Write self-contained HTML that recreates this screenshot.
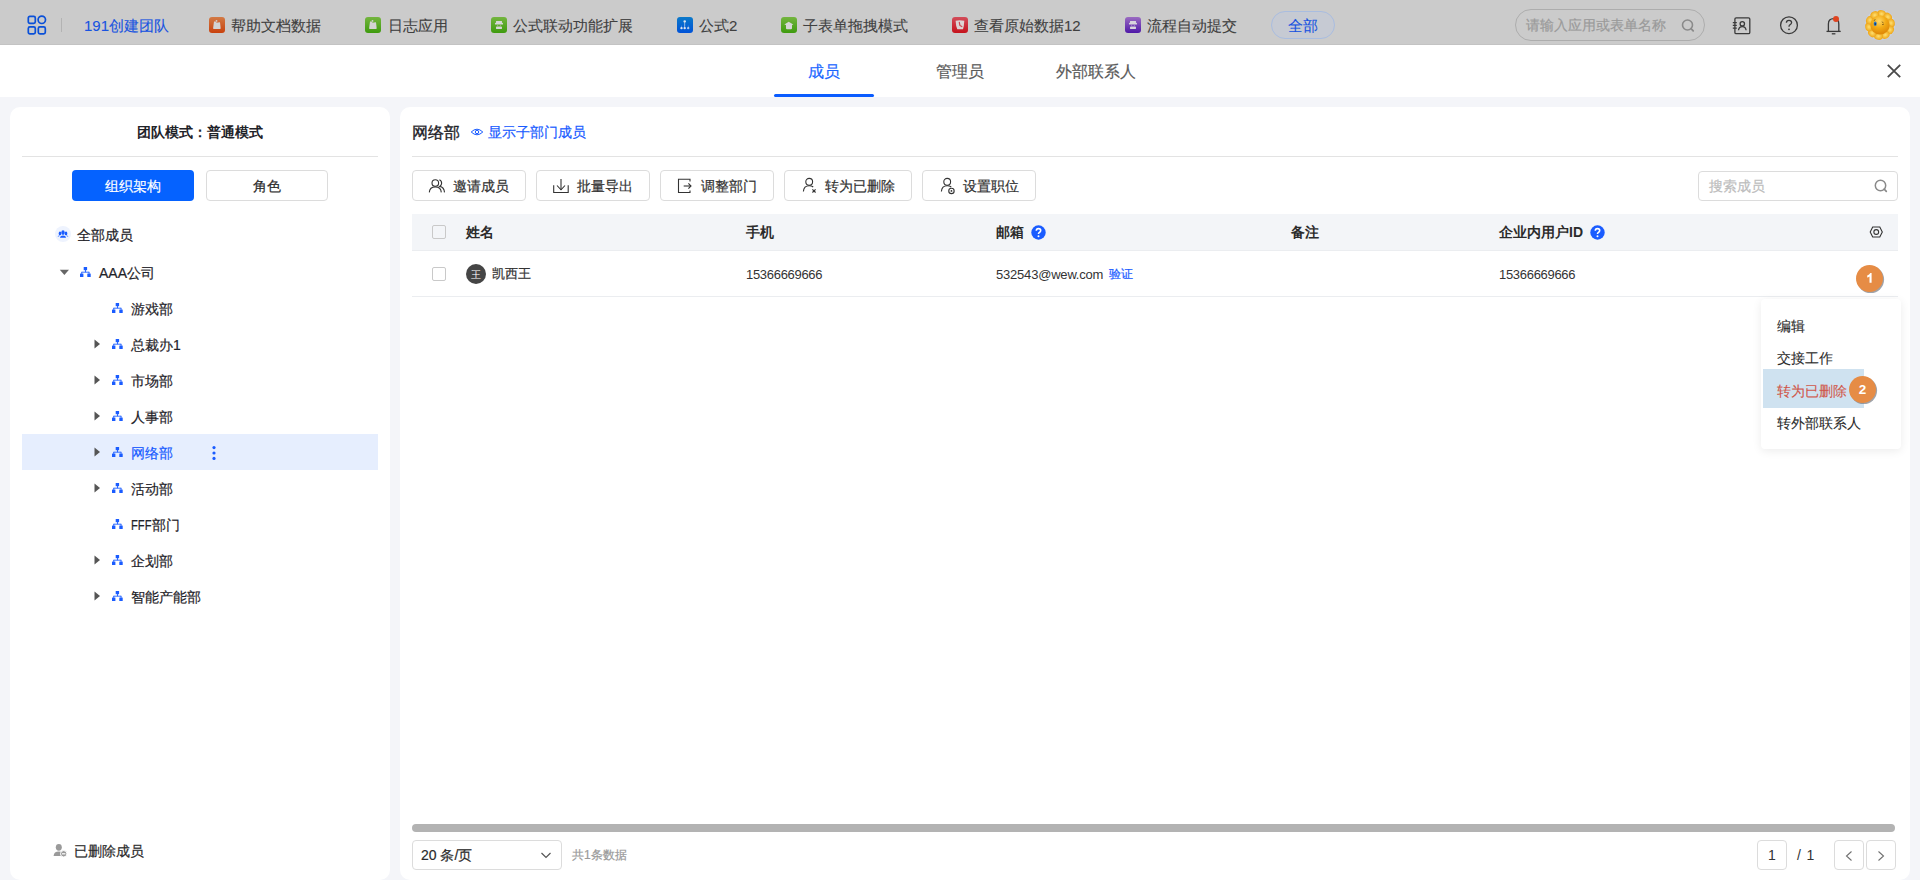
<!DOCTYPE html>
<html><head><meta charset="utf-8">
<style>
*{box-sizing:border-box;margin:0;padding:0}
html,body{width:1920px;height:880px;overflow:hidden;background:#f4f5f9;font-family:"Liberation Sans",sans-serif;color:#1f2329}
.a,.tree,.td,.mi,.appt,.btn span{-webkit-text-stroke:0.2px currentColor}
.nb{-webkit-text-stroke:0}
.mi{-webkit-text-stroke:0.1px currentColor}
.appt{-webkit-text-stroke:0.1px currentColor}
.a{position:absolute;white-space:nowrap}
#top{position:absolute;left:0;top:0;width:1920px;height:45px;background:#cbcbcb;border-bottom:1px solid #c3c3c3}
#tabs{position:absolute;left:0;top:45px;width:1920px;height:52px;background:#fff}
.appi{position:absolute;top:17px;width:16px;height:16px;border-radius:3px}
.appt{position:absolute;top:16px;font-size:15px;line-height:20px;color:#404040}
.panel{position:absolute;background:#fff;border-radius:10px}
.btn{position:absolute;top:170px;height:31px;border:1px solid #dcdcdc;border-radius:4px;background:#fff}
.btn span{position:absolute;font-size:14px;line-height:20px;top:5px;color:#333}
.btn svg{position:absolute;top:4px}
.tree{position:absolute;font-size:14px;line-height:20px;color:#1f2329}
.th{position:absolute;top:222px;font-size:14px;line-height:20px;font-weight:bold;color:#2b2b2b}
.td{position:absolute;top:264px;font-size:13px;line-height:20px;color:#333}
.cb{position:absolute;width:14px;height:14px;border:1px solid #c9c9c9;border-radius:2px;background:#fff}
.mi{position:absolute;left:1777px;font-size:14px;line-height:20px;color:#2b2b2b}
</style></head>
<body>
<!-- TOP BAR -->
<div id="top">
  <svg class="a" style="left:27px;top:15px" width="20" height="20" viewBox="0 0 20 20">
    <g fill="none" stroke="#0a50d8" stroke-width="1.7">
      <rect x="1.3" y="1.3" width="7" height="7" rx="1.6"/>
      <circle cx="14.8" cy="4.8" r="3.7"/>
      <rect x="1.3" y="11.8" width="7" height="7" rx="1.6"/>
      <rect x="11.3" y="11.8" width="7" height="7" rx="1.6"/>
    </g>
  </svg>
  <div class="a" style="left:61px;top:18px;width:1px;height:14px;background:#b3b3b3"></div>
  <div class="appt" style="left:84px;color:#1853e0">191创建团队</div>

  <div class="appi" style="left:209px;background:linear-gradient(#d27a45,#c9420e)"></div>
  <div class="appt" style="left:231px">帮助文档数据</div>
  <div class="appi" style="left:365px;background:linear-gradient(#74b53f,#3e9b0e)"></div>
  <div class="appt" style="left:388px">日志应用</div>
  <div class="appi" style="left:491px;background:linear-gradient(#74b53f,#3e9b0e)"></div>
  <div class="appt" style="left:513px">公式联动功能扩展</div>
  <div class="appi" style="left:677px;background:linear-gradient(#0b79c9,#0052d8)"></div>
  <div class="appt" style="left:699px">公式2</div>
  <div class="appi" style="left:781px;background:linear-gradient(#74b53f,#3e9b0e)"></div>
  <div class="appt" style="left:803px">子表单拖拽模式</div>
  <div class="appi" style="left:952px;background:linear-gradient(#d24d5a,#c5121c)"></div>
  <div class="appt" style="left:974px">查看原始数据12</div>
  <div class="appi" style="left:1125px;background:linear-gradient(#9a6bc1,#4f18a8)"></div>
  <div class="appt" style="left:1147px">流程自动提交</div>

  <div class="a" style="left:1271px;top:11px;width:64px;height:28px;border-radius:14px;background:#c6cad3;border:1px solid #a9bde0"></div>
  <div class="appt" style="left:1288px;color:#1853e0">全部</div>

  <div class="a" style="left:1515px;top:9px;width:190px;height:32px;border-radius:16px;border:1px solid #adadad"></div>
  <div class="a" style="left:1526px;top:15px;font-size:14px;line-height:20px;color:#9a9a9a">请输入应用或表单名称</div>

  <svg class="a" style="left:209px;top:17px" width="16" height="16" viewBox="0 0 16 16"><g fill="#d3d3d3"><path d="M5 4.5 L6.4 4.5 Q7.4 6.1 8.7 5.5 L11 5.3 L11.7 11.2 Q11.8 12 11 12 L4.8 12 Q4 12 4.1 11.2 Z"/><circle cx="7.5" cy="3.9" r="0.95"/></g></svg>
  <svg class="a" style="left:365px;top:17px" width="16" height="16" viewBox="0 0 16 16"><g fill="#d3d3d3"><path d="M5 4.5 L6.4 4.5 Q7.4 6.1 8.7 5.5 L11 5.3 L11.7 11.2 Q11.8 12 11 12 L4.8 12 Q4 12 4.1 11.2 Z"/><circle cx="7.5" cy="3.9" r="0.95"/></g></svg>
  <svg class="a" style="left:491px;top:17px" width="16" height="16" viewBox="0 0 16 16"><g fill="#d6d6d6"><rect x="5" y="3.9" width="6" height="2.2" rx="0.4"/><rect x="3.9" y="5.8" width="8.2" height="1.8" rx="0.9"/><rect x="5" y="9.5" width="6" height="2.6" rx="0.9"/><circle cx="6.7" cy="8.4" r="0.5" opacity="0.6"/><circle cx="9.3" cy="8.4" r="0.5" opacity="0.6"/></g></svg>
  <svg class="a" style="left:677px;top:17px" width="16" height="16" viewBox="0 0 16 16"><g fill="#dfe6ee"><ellipse cx="7.7" cy="4.4" rx="1.3" ry="1.1"/><rect x="7.25" y="4.4" width="0.9" height="6.9" opacity="0.7"/><ellipse cx="4.5" cy="11.2" rx="1.2" ry="1.1"/><ellipse cx="7.7" cy="11.2" rx="1.2" ry="1.1"/><ellipse cx="11.2" cy="11.2" rx="1.2" ry="1.1" opacity="0.8"/><rect x="4.2" y="8.6" width="0.6" height="2.6" opacity="0.5"/><rect x="10.9" y="8.6" width="0.6" height="2.6" opacity="0.5"/></g></svg>
  <svg class="a" style="left:781px;top:17px" width="16" height="16" viewBox="0 0 16 16"><path d="M3.3 7.4 L7.7 4.8 L12.3 7.4 L11 8 L11 11.2 Q11 12.2 10 12.2 L6 12.2 Q5 12.2 5 11.2 L5 8 Z" fill="#d6d6d6"/></svg>
  <svg class="a" style="left:952px;top:17px" width="16" height="16" viewBox="0 0 16 16"><path d="M3.6 3.8 L7.7 3.2 L12.3 3.8 L11.8 9 L11 12.3 L5.3 12.3 L4.2 9 Z" fill="#dcd4d4"/><path d="M7.3 5.3 L7.9 8.4 L9.8 9.5" stroke="#cf4450" stroke-width="1.2" fill="none" stroke-linecap="round"/></svg>
  <svg class="a" style="left:1125px;top:17px" width="16" height="16" viewBox="0 0 16 16"><g fill="#d8d4dc"><rect x="5" y="3.9" width="6" height="2.2" rx="0.4"/><rect x="3.9" y="5.8" width="8.2" height="1.8" rx="0.9"/><rect x="5" y="9.5" width="6" height="2.6" rx="0.9"/><circle cx="6.7" cy="8.4" r="0.5" opacity="0.6"/><circle cx="9.3" cy="8.4" r="0.5" opacity="0.6"/></g></svg>
  <svg class="a" style="left:1680px;top:18px" width="16" height="16" viewBox="0 0 16 16"><circle cx="7.5" cy="7" r="5" fill="none" stroke="#8a8a8a" stroke-width="1.6"/><path d="M11 10.6 L13.2 12.8" stroke="#8a8a8a" stroke-width="1.8" stroke-linecap="round"/></svg>
  <svg class="a" style="left:1730px;top:14px" width="22" height="22" viewBox="0 0 22 22"><g fill="none" stroke="#3a3a3a" stroke-width="1.3"><rect x="4.9" y="3.8" width="14.9" height="15.9" rx="1.3"/><path d="M2.8 8.6 H6.8 M2.8 11.3 H6.8 M2.8 14.2 H6.8"/><circle cx="12.3" cy="9.8" r="2.2"/><path d="M8.5 16.3 Q8.9 12.6 12.3 12.6 Q15.7 12.6 16.1 16.3"/></g></svg>
  <svg class="a" style="left:1778px;top:14px" width="22" height="22" viewBox="0 0 22 22"><circle cx="11" cy="11.2" r="8.4" fill="none" stroke="#3a3a3a" stroke-width="1.3"/><path d="M8.4 8.8 Q8.4 6.3 11 6.3 Q13.6 6.3 13.6 8.6 Q13.6 10 11.9 10.8 Q11 11.3 11 12.8" fill="none" stroke="#3a3a3a" stroke-width="1.3"/><circle cx="11" cy="15.3" r="0.9" fill="#3a3a3a"/></svg>
  <svg class="a" style="left:1823px;top:13px" width="22" height="24" viewBox="0 0 22 24"><g fill="none" stroke="#3a3a3a" stroke-width="1.3"><path d="M5.4 18.4 L5.4 11 Q5.4 5.7 10.6 5.7 Q15.8 5.7 15.8 11 L15.8 18.4"/><path d="M3.5 18.4 H17.7"/><path d="M8.8 20.8 H12.4"/></g><circle cx="13" cy="6.1" r="3" fill="#df4420"/></svg>
  <svg class="a" style="left:1864px;top:9px" width="32" height="32" viewBox="0 0 32 32">
    <defs><radialGradient id="sf" cx="45%" cy="30%" r="65%"><stop offset="0" stop-color="#ffd866"/><stop offset="0.55" stop-color="#f2aa14"/><stop offset="1" stop-color="#e08a08"/></radialGradient>
    <radialGradient id="pt" cx="50%" cy="50%" r="55%"><stop offset="0" stop-color="#ffe070"/><stop offset="1" stop-color="#eca010"/></radialGradient></defs>
    <circle cx="16" cy="16" r="15.5" fill="#d3d5da" stroke="#bfc8dc" stroke-width="0.6"/>
    <g fill="url(#pt)"><ellipse cx="17.56" cy="4.91" rx="4.4" ry="3.8" transform="rotate(8 17.56 4.91)"/><ellipse cx="23.78" cy="7.94" rx="4.4" ry="3.8" transform="rotate(44 23.78 7.94)"/><ellipse cx="27.03" cy="14.06" rx="4.4" ry="3.8" transform="rotate(80 27.03 14.06)"/><ellipse cx="26.07" cy="20.91" rx="4.4" ry="3.8" transform="rotate(116 26.07 20.91)"/><ellipse cx="21.26" cy="25.89" rx="4.4" ry="3.8" transform="rotate(152 21.26 25.89)"/><ellipse cx="14.44" cy="27.09" rx="4.4" ry="3.8" transform="rotate(188 14.44 27.09)"/><ellipse cx="8.22" cy="24.06" rx="4.4" ry="3.8" transform="rotate(224 8.22 24.06)"/><ellipse cx="4.97" cy="17.94" rx="4.4" ry="3.8" transform="rotate(260 4.97 17.94)"/><ellipse cx="5.93" cy="11.09" rx="4.4" ry="3.8" transform="rotate(296 5.93 11.09)"/><ellipse cx="10.74" cy="6.11" rx="4.4" ry="3.8" transform="rotate(332 10.74 6.11)"/></g>
    <circle cx="16" cy="16" r="9.6" fill="url(#sf)"/>
    <ellipse cx="11.2" cy="14.8" rx="1.5" ry="2.2" fill="#2a78c8"/><circle cx="11.3" cy="15" r="0.8" fill="#10203a"/>
    <path d="M17.8 12.8 L19.6 14 M18 15.6 L19.8 15.4" stroke="#6a4a10" stroke-width="0.7"/>
    <path d="M9.8 11.6 L11.4 10.6" stroke="#333" stroke-width="0.7"/>
  </svg>
</div>

<!-- TABS -->
<div id="tabs">
  <div class="a" style="left:808px;top:16px;font-size:16px;line-height:22px;color:#1a66ff">成员</div>
  <div class="a" style="left:936px;top:16px;font-size:16px;line-height:22px;color:#5a5a5a">管理员</div>
  <div class="a" style="left:1056px;top:16px;font-size:16px;line-height:22px;color:#5a5a5a">外部联系人</div>
  <div class="a" style="left:774px;top:49px;width:100px;height:3px;border-radius:2px;background:#0a5cff"></div>
  <svg class="a" style="left:1885px;top:17px" width="18" height="18" viewBox="0 0 18 18"><path d="M2.8 2.8 L15.2 15.2 M15.2 2.8 L2.8 15.2" stroke="#4a4a4a" stroke-width="1.8"/></svg>
</div>

<!-- LEFT PANEL -->
<div class="panel" style="left:10px;top:107px;width:380px;height:773px"></div>
<div class="a nb" style="left:137px;top:122px;font-size:14px;line-height:20px;font-weight:bold;color:#1f2329">团队模式：普通模式</div>
<div class="a" style="left:22px;top:156px;width:356px;height:1px;background:#e3e3e3"></div>
<div class="a" style="left:72px;top:170px;width:122px;height:31px;border-radius:4px;background:#0562ff"></div>
<div class="a" style="left:105px;top:176px;font-size:14px;line-height:20px;color:#fff">组织架构</div>
<div class="a" style="left:206px;top:170px;width:122px;height:31px;border-radius:4px;border:1px solid #dcdcdc;background:#fff"></div>
<div class="a" style="left:253px;top:176px;font-size:14px;line-height:20px;color:#2b2b2b">角色</div>

<div class="a" style="left:22px;top:434px;width:356px;height:36px;background:#e6eefe"></div>

<div class="a" style="left:55px;top:226px;width:16px;height:16px;border-radius:50%;background:#eef3fe"></div>
<svg class="a" style="left:55px;top:226px" width="16" height="16" viewBox="0 0 16 16"><g fill="#1a5cff"><ellipse cx="8" cy="6.6" rx="1.7" ry="2.4"/><ellipse cx="5" cy="7.4" rx="1.3" ry="1.9"/><ellipse cx="11" cy="7.4" rx="1.3" ry="1.9"/><path d="M4.9 11.8 Q5.2 9.6 8 9.6 Q10.8 9.6 11.1 11.8 Z"/><path d="M2.6 10.8 Q3 9.3 4.8 9.4 L4.2 10.2 Z"/><path d="M13.4 10.8 Q13 9.3 11.2 9.4 L11.8 10.2 Z"/></g></svg>
<svg class="a" style="left:59px;top:269px" width="11" height="7" viewBox="0 0 11 7"><path d="M0.8 0.8 L10 0.8 L5.4 6 Z" fill="#666"/></svg>
<svg class="a" style="left:80px;top:267px" width="11" height="10" viewBox="0 0 11 10"><g fill="#1a5cff"><rect x="3.7" y="0" width="3.4" height="3.2"/><rect x="5" y="3" width="0.9" height="2.2"/><rect x="1.6" y="4.7" width="7.6" height="0.9"/><rect x="0" y="6.6" width="3.4" height="3.4"/><rect x="7.3" y="6.6" width="3.4" height="3.4"/><rect x="1.3" y="4.9" width="0.9" height="2"/><rect x="8.6" y="4.9" width="0.9" height="2"/></g></svg>
<svg class="a" style="left:112px;top:303px" width="11" height="10" viewBox="0 0 11 10"><g fill="#1a5cff"><rect x="3.7" y="0" width="3.4" height="3.2"/><rect x="5" y="3" width="0.9" height="2.2"/><rect x="1.6" y="4.7" width="7.6" height="0.9"/><rect x="0" y="6.6" width="3.4" height="3.4"/><rect x="7.3" y="6.6" width="3.4" height="3.4"/><rect x="1.3" y="4.9" width="0.9" height="2"/><rect x="8.6" y="4.9" width="0.9" height="2"/></g></svg>
<svg class="a" style="left:94px;top:339px" width="7" height="10" viewBox="0 0 7 10"><path d="M0.5 0.5 L6 5 L0.5 9.5 Z" fill="#555"/></svg>
<svg class="a" style="left:112px;top:339px" width="11" height="10" viewBox="0 0 11 10"><g fill="#1a5cff"><rect x="3.7" y="0" width="3.4" height="3.2"/><rect x="5" y="3" width="0.9" height="2.2"/><rect x="1.6" y="4.7" width="7.6" height="0.9"/><rect x="0" y="6.6" width="3.4" height="3.4"/><rect x="7.3" y="6.6" width="3.4" height="3.4"/><rect x="1.3" y="4.9" width="0.9" height="2"/><rect x="8.6" y="4.9" width="0.9" height="2"/></g></svg>
<svg class="a" style="left:94px;top:375px" width="7" height="10" viewBox="0 0 7 10"><path d="M0.5 0.5 L6 5 L0.5 9.5 Z" fill="#555"/></svg>
<svg class="a" style="left:112px;top:375px" width="11" height="10" viewBox="0 0 11 10"><g fill="#1a5cff"><rect x="3.7" y="0" width="3.4" height="3.2"/><rect x="5" y="3" width="0.9" height="2.2"/><rect x="1.6" y="4.7" width="7.6" height="0.9"/><rect x="0" y="6.6" width="3.4" height="3.4"/><rect x="7.3" y="6.6" width="3.4" height="3.4"/><rect x="1.3" y="4.9" width="0.9" height="2"/><rect x="8.6" y="4.9" width="0.9" height="2"/></g></svg>
<svg class="a" style="left:94px;top:411px" width="7" height="10" viewBox="0 0 7 10"><path d="M0.5 0.5 L6 5 L0.5 9.5 Z" fill="#555"/></svg>
<svg class="a" style="left:112px;top:411px" width="11" height="10" viewBox="0 0 11 10"><g fill="#1a5cff"><rect x="3.7" y="0" width="3.4" height="3.2"/><rect x="5" y="3" width="0.9" height="2.2"/><rect x="1.6" y="4.7" width="7.6" height="0.9"/><rect x="0" y="6.6" width="3.4" height="3.4"/><rect x="7.3" y="6.6" width="3.4" height="3.4"/><rect x="1.3" y="4.9" width="0.9" height="2"/><rect x="8.6" y="4.9" width="0.9" height="2"/></g></svg>
<svg class="a" style="left:94px;top:447px" width="7" height="10" viewBox="0 0 7 10"><path d="M0.5 0.5 L6 5 L0.5 9.5 Z" fill="#555"/></svg>
<svg class="a" style="left:112px;top:447px" width="11" height="10" viewBox="0 0 11 10"><g fill="#1a5cff"><rect x="3.7" y="0" width="3.4" height="3.2"/><rect x="5" y="3" width="0.9" height="2.2"/><rect x="1.6" y="4.7" width="7.6" height="0.9"/><rect x="0" y="6.6" width="3.4" height="3.4"/><rect x="7.3" y="6.6" width="3.4" height="3.4"/><rect x="1.3" y="4.9" width="0.9" height="2"/><rect x="8.6" y="4.9" width="0.9" height="2"/></g></svg>
<svg class="a" style="left:94px;top:483px" width="7" height="10" viewBox="0 0 7 10"><path d="M0.5 0.5 L6 5 L0.5 9.5 Z" fill="#555"/></svg>
<svg class="a" style="left:112px;top:483px" width="11" height="10" viewBox="0 0 11 10"><g fill="#1a5cff"><rect x="3.7" y="0" width="3.4" height="3.2"/><rect x="5" y="3" width="0.9" height="2.2"/><rect x="1.6" y="4.7" width="7.6" height="0.9"/><rect x="0" y="6.6" width="3.4" height="3.4"/><rect x="7.3" y="6.6" width="3.4" height="3.4"/><rect x="1.3" y="4.9" width="0.9" height="2"/><rect x="8.6" y="4.9" width="0.9" height="2"/></g></svg>
<svg class="a" style="left:112px;top:519px" width="11" height="10" viewBox="0 0 11 10"><g fill="#1a5cff"><rect x="3.7" y="0" width="3.4" height="3.2"/><rect x="5" y="3" width="0.9" height="2.2"/><rect x="1.6" y="4.7" width="7.6" height="0.9"/><rect x="0" y="6.6" width="3.4" height="3.4"/><rect x="7.3" y="6.6" width="3.4" height="3.4"/><rect x="1.3" y="4.9" width="0.9" height="2"/><rect x="8.6" y="4.9" width="0.9" height="2"/></g></svg>
<svg class="a" style="left:94px;top:555px" width="7" height="10" viewBox="0 0 7 10"><path d="M0.5 0.5 L6 5 L0.5 9.5 Z" fill="#555"/></svg>
<svg class="a" style="left:112px;top:555px" width="11" height="10" viewBox="0 0 11 10"><g fill="#1a5cff"><rect x="3.7" y="0" width="3.4" height="3.2"/><rect x="5" y="3" width="0.9" height="2.2"/><rect x="1.6" y="4.7" width="7.6" height="0.9"/><rect x="0" y="6.6" width="3.4" height="3.4"/><rect x="7.3" y="6.6" width="3.4" height="3.4"/><rect x="1.3" y="4.9" width="0.9" height="2"/><rect x="8.6" y="4.9" width="0.9" height="2"/></g></svg>
<svg class="a" style="left:94px;top:591px" width="7" height="10" viewBox="0 0 7 10"><path d="M0.5 0.5 L6 5 L0.5 9.5 Z" fill="#555"/></svg>
<svg class="a" style="left:112px;top:591px" width="11" height="10" viewBox="0 0 11 10"><g fill="#1a5cff"><rect x="3.7" y="0" width="3.4" height="3.2"/><rect x="5" y="3" width="0.9" height="2.2"/><rect x="1.6" y="4.7" width="7.6" height="0.9"/><rect x="0" y="6.6" width="3.4" height="3.4"/><rect x="7.3" y="6.6" width="3.4" height="3.4"/><rect x="1.3" y="4.9" width="0.9" height="2"/><rect x="8.6" y="4.9" width="0.9" height="2"/></g></svg>
<svg class="a" style="left:211px;top:445px" width="6" height="16" viewBox="0 0 6 16"><g fill="#1a5cff"><circle cx="3" cy="2.6" r="1.6"/><circle cx="3" cy="8" r="1.6"/><circle cx="3" cy="13.4" r="1.6"/></g></svg>
<svg class="a" style="left:53px;top:843px" width="15" height="15" viewBox="0 0 15 15"><g fill="#9a9a9a"><ellipse cx="5.8" cy="4.3" rx="3" ry="3.4"/><path d="M0.6 13 Q0.9 8.6 5.8 8.6 Q8 8.6 9 9.4 L8 13 Z"/><circle cx="10.7" cy="10.8" r="3.2" stroke="#fff" stroke-width="1"/></g><rect x="9" y="10.2" width="3.4" height="1.2" fill="#fff"/></svg>
<div class="tree" style="left:77px;top:225px">全部成员</div>
<div class="tree" style="left:99px;top:263px">AAA公司</div>
<div class="tree" style="left:131px;top:299px">游戏部</div>
<div class="tree" style="left:131px;top:335px">总裁办1</div>
<div class="tree" style="left:131px;top:371px">市场部</div>
<div class="tree" style="left:131px;top:407px">人事部</div>
<div class="tree" style="left:131px;top:443px;color:#1a5cff">网络部</div>
<div class="tree" style="left:131px;top:479px">活动部</div>
<div class="tree" style="left:131px;top:515px"><span style="display:inline-block;transform:scaleX(0.8);transform-origin:0 0;margin-right:-5.1px">FFF</span>部门</div>
<div class="tree" style="left:131px;top:551px">企划部</div>
<div class="tree" style="left:131px;top:587px">智能产能部</div>
<div class="tree" style="left:74px;top:841px;color:#2b2b2b">已删除成员</div>

<!-- RIGHT PANEL -->
<div class="panel" style="left:400px;top:107px;width:1510px;height:773px"></div>
<div class="a" style="left:412px;top:122px;font-size:16px;line-height:22px;-webkit-text-stroke:0.35px #1f2329;color:#1f2329">网络部</div>
<div class="a" style="left:488px;top:122px;font-size:14px;line-height:20px;color:#1a5cff">显示子部门成员</div>
<div class="a" style="left:412px;top:156px;width:1486px;height:1px;background:#e3e3e3"></div>

<div class="btn" style="left:412px;width:114px"><span style="left:40px">邀请成员</span></div>
<div class="btn" style="left:536px;width:114px"><span style="left:40px">批量导出</span></div>
<div class="btn" style="left:660px;width:114px"><span style="left:40px">调整部门</span></div>
<div class="btn" style="left:784px;width:128px"><span style="left:40px">转为已删除</span></div>
<div class="btn" style="left:922px;width:114px"><span style="left:40px">设置职位</span></div>

<div class="a" style="left:1698px;top:171px;width:200px;height:30px;border:1px solid #dcdcdc;border-radius:4px"></div>
<div class="a" style="left:1709px;top:176px;font-size:14px;line-height:20px;color:#bdbdbd">搜索成员</div>

<!-- TABLE -->
<div class="a" style="left:412px;top:214px;width:1486px;height:36px;background:#f3f5f8"></div>
<div class="a" style="left:412px;top:250px;width:1486px;height:1px;background:#ebedf0"></div>
<div class="a" style="left:412px;top:296px;width:1486px;height:1px;background:#ebedf0"></div>
<div class="cb" style="left:432px;top:225px;background:transparent"></div>
<div class="th" style="left:466px">姓名</div>
<div class="th" style="left:746px">手机</div>
<div class="th" style="left:996px">邮箱</div>
<div class="th" style="left:1291px">备注</div>
<div class="th" style="left:1499px">企业内用户ID</div>

<div class="cb" style="left:432px;top:267px"></div>
<div class="a" style="left:466px;top:264px;width:20px;height:20px;border-radius:50%;background:#454545"></div>
<div class="td" style="left:492px">凯西王</div>
<div class="td nb" style="left:746px;top:265px;letter-spacing:-0.3px">15366669666</div>
<div class="td nb" style="left:996px;top:265px;letter-spacing:-0.2px">532543@wew.com</div>
<div class="td" style="left:1109px;top:264px;font-size:12px;color:#1a5cff">验证</div>
<div class="td nb" style="left:1499px;top:265px;letter-spacing:-0.3px">15366669666</div>

<svg class="a" style="left:470px;top:127px" width="15" height="10" viewBox="0 0 15 10"><g fill="none" stroke="#1a5cff" stroke-width="1"><path d="M1.2 5 Q7 -0.6 12.8 5 Q7 10.6 1.2 5 Z"/><circle cx="7" cy="5" r="1.7"/></g></svg>
<svg class="a" style="left:426px;top:176px" width="22" height="20" viewBox="0 0 22 20"><g fill="none" stroke="#333" stroke-width="1.1"><circle cx="9.3" cy="7" r="3.3"/><path d="M3.3 16.4 Q3.7 10.9 9.3 10.9 Q14.9 10.9 15.3 16.4"/><path d="M13.4 3.8 Q15.9 4.9 15.6 7.6 Q15.4 9.4 13.7 10.4 Q18.1 11.2 18.5 16.4"/></g></svg>
<svg class="a" style="left:550px;top:176px" width="22" height="20" viewBox="0 0 22 20"><g fill="none" stroke="#333" stroke-width="1.1"><path d="M3.7 9.2 V16.5 H18.2 V9.2"/><path d="M11 3 V14"/><path d="M7 9.5 L11 13.8 L15 9.5"/></g></svg>
<svg class="a" style="left:674px;top:176px" width="22" height="20" viewBox="0 0 22 20"><g fill="none" stroke="#333" stroke-width="1.1"><path d="M16 5.5 V3.3 H4.5 V16.5 H16 V14.5"/><path d="M9.7 10 H17"/><path d="M14.4 7.3 L17 10 L14.4 12.7"/></g></svg>
<svg class="a" style="left:798px;top:176px" width="22" height="20" viewBox="0 0 22 20"><g fill="none" stroke="#333" stroke-width="1.1"><circle cx="11.2" cy="5.8" r="3.4"/><path d="M5.4 15.5 Q5.8 9.7 11.2 9.7 Q13.8 9.7 15.2 11"/><path d="M14.4 13.3 L17.6 16.5 M17.6 13.3 L14.4 16.5"/></g></svg>
<svg class="a" style="left:936px;top:176px" width="22" height="20" viewBox="0 0 22 20"><g fill="none" stroke="#333" stroke-width="1.1"><circle cx="11.2" cy="5.8" r="3.4"/><path d="M5.4 15.5 Q5.8 9.7 11.2 9.7 Q13.8 9.7 15.2 11"/><circle cx="15.45" cy="14.9" r="2.7"/></g><circle cx="15.45" cy="14.9" r="0.9" fill="#333"/></svg>
<svg class="a" style="left:1872px;top:177px" width="18" height="18" viewBox="0 0 18 18"><circle cx="8.5" cy="8.5" r="5.2" fill="none" stroke="#8a8a8a" stroke-width="1.5"/><path d="M12.2 12.2 L14.3 14.3" stroke="#8a8a8a" stroke-width="1.7" stroke-linecap="round"/></svg>
<svg class="a" style="left:1031px;top:225px" width="15" height="15" viewBox="0 0 15 15"><circle cx="7.5" cy="7.5" r="7.2" fill="#1a5cff"/><path d="M5.3 5.8 Q5.3 3.6 7.5 3.6 Q9.7 3.6 9.7 5.6 Q9.7 6.8 8.4 7.4 Q7.5 7.9 7.5 9" fill="none" stroke="#fff" stroke-width="1.6"/><circle cx="7.5" cy="11.3" r="1" fill="#fff"/></svg>
<svg class="a" style="left:1590px;top:225px" width="15" height="15" viewBox="0 0 15 15"><circle cx="7.5" cy="7.5" r="7.2" fill="#1a5cff"/><path d="M5.3 5.8 Q5.3 3.6 7.5 3.6 Q9.7 3.6 9.7 5.6 Q9.7 6.8 8.4 7.4 Q7.5 7.9 7.5 9" fill="none" stroke="#fff" stroke-width="1.6"/><circle cx="7.5" cy="11.3" r="1" fill="#fff"/></svg>
<svg class="a" style="left:1869px;top:225px" width="15" height="14" viewBox="0 0 15 14"><g fill="none" stroke="#333" stroke-width="1.1"><path d="M1.2 7 L3.7 2 H10.8 L13.3 7 L10.8 12 H3.7 Z"/><circle cx="7.25" cy="7" r="2.4"/></g></svg>
<div class="a nb" style="left:466px;top:265px;width:20px;height:20px;font-size:10px;line-height:20px;text-align:center;color:#fff">王</div>
<svg class="a" style="left:539px;top:850px" width="14" height="10" viewBox="0 0 14 10"><path d="M2.5 3 L7 7.5 L11.5 3" fill="none" stroke="#555" stroke-width="1.2"/></svg>
<svg class="a" style="left:1843px;top:849px" width="12" height="14" viewBox="0 0 12 14"><path d="M8.5 2.5 L3.5 7 L8.5 11.5" fill="none" stroke="#707070" stroke-width="1.1"/></svg>
<svg class="a" style="left:1875px;top:849px" width="12" height="14" viewBox="0 0 12 14"><path d="M3.5 2.5 L8.5 7 L3.5 11.5" fill="none" stroke="#707070" stroke-width="1.1"/></svg>
<!-- scrollbar & pagination -->
<div class="a" style="left:412px;top:824px;width:1483px;height:8px;border-radius:4px;background:#b3b3b3"></div>
<div class="a" style="left:412px;top:840px;width:150px;height:30px;border:1px solid #dcdcdc;border-radius:4px"></div>
<div class="a" style="left:421px;top:845px;font-size:14px;line-height:20px;color:#2b2b2b">20 条/页</div>
<div class="a" style="left:572px;top:845px;font-size:12px;line-height:20px;color:#999">共1条数据</div>
<div class="a" style="left:1757px;top:840px;width:30px;height:30px;border:1px solid #dcdcdc;border-radius:4px"></div>
<div class="a nb" style="left:1768px;top:845px;font-size:14px;line-height:20px;color:#333">1</div>
<div class="a nb" style="left:1797px;top:845px;font-size:14px;line-height:20px;color:#333;letter-spacing:0.8px">/ 1</div>
<div class="a" style="left:1834px;top:840px;width:30px;height:30px;border:1px solid #dcdcdc;border-radius:4px"></div>
<div class="a" style="left:1866px;top:840px;width:30px;height:30px;border:1px solid #dcdcdc;border-radius:4px"></div>

<!-- dropdown menu -->
<div class="a" style="left:1761px;top:299px;width:140px;height:150px;background:#fff;border-radius:4px;box-shadow:0 2px 10px rgba(0,0,0,0.08)"></div>
<div class="a" style="left:1763px;top:369px;width:101px;height:39px;background:#cfe2f0"></div>
<div class="mi" style="top:316px">编辑</div>
<div class="mi" style="top:348px">交接工作</div>
<div class="mi" style="top:381px;color:#d0574a">转为已删除</div>
<div class="mi" style="top:413px">转外部联系人</div>


<svg class="a" style="left:1853px;top:262px" width="34" height="34" viewBox="0 0 34 34"><circle cx="17.6" cy="17.6" r="13.5" fill="#777c84" opacity="0.7"/><circle cx="16.5" cy="16.5" r="13.5" fill="#e68c45"/><path d="M14.2 13.6 Q16.4 12.6 17.3 10.9 L18.6 10.9 L18.6 20.8 L16.5 20.8 L16.5 14.4 Q15.4 15.3 14.2 15.6 Z" fill="#fff"/></svg>
<svg class="a" style="left:1846px;top:373px" width="34" height="34" viewBox="0 0 34 34"><circle cx="17.6" cy="17.6" r="13.5" fill="#777c84" opacity="0.7"/><circle cx="16.5" cy="16.5" r="13.5" fill="#e68c45"/><text x="16.5" y="21.3" text-anchor="middle" font-family="Liberation Sans" font-weight="bold" font-size="13.5" fill="#fff">2</text></svg>
</body></html>
